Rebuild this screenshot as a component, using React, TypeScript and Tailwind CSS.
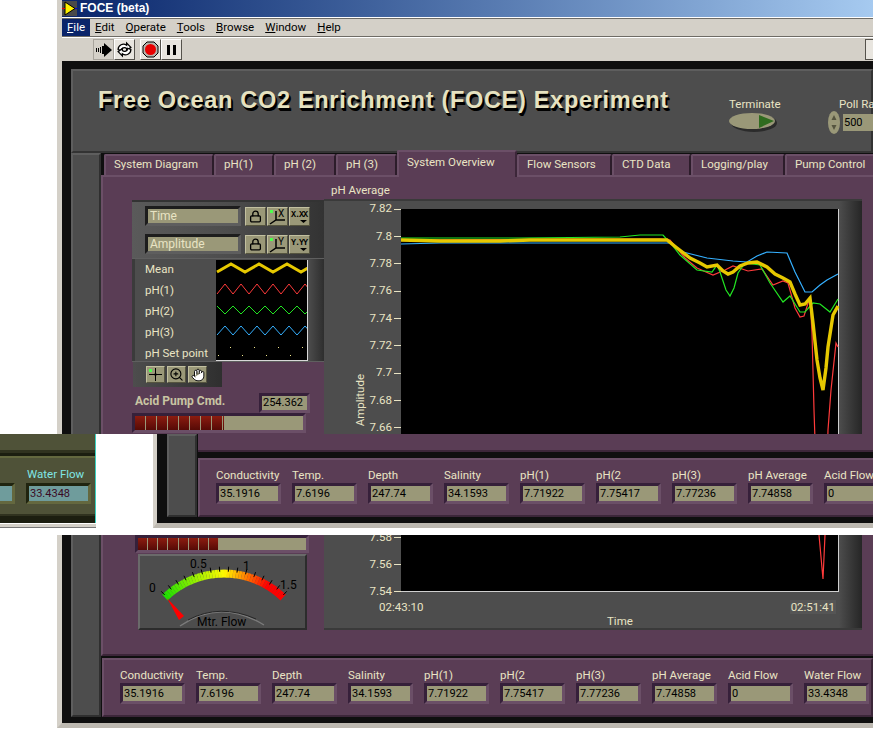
import { ReactNode } from 'react';
import { Hand, Lock, ZoomIn } from 'lucide-react';

const fields = [
  { label: 'Conductivity', value: '35.1916' },
  { label: 'Temp.', value: '7.6196' },
  { label: 'Depth', value: '247.74' },
  { label: 'Salinity', value: '34.1593' },
  { label: 'pH(1)', value: '7.71922' },
  { label: 'pH(2', value: '7.75417' },
  { label: 'pH(3)', value: '7.77236' },
  { label: 'pH Average', value: '7.74858' },
  { label: 'Acid Flow', value: '0' },
  { label: 'Water Flow', value: '33.4348' },
];

const tabs = [
  { label: 'System Diagram', width: 'w-[110px]' },
  { label: 'pH(1)', width: 'w-[60px]' },
  { label: 'pH (2)', width: 'w-[62px]' },
  { label: 'pH (3)', width: 'w-[61px]' },
  { label: 'System Overview', width: 'w-[120px]', active: true },
  { label: 'Flow Sensors', width: 'w-[95px]' },
  { label: 'CTD Data', width: 'w-[79px]' },
  { label: 'Logging/play', width: 'w-[94px]' },
  { label: 'Pump Control', width: 'w-[90px]' },
];

const menus = ['Edit', 'Operate', 'Tools', 'Browse', 'Window', 'Help'];

const yLabels = ['7.82', '7.8', '7.78', '7.76', '7.74', '7.72', '7.7', '7.68', '7.66', '7.64', '7.62', '7.6', '7.58', '7.56', '7.54'];

const meanLine = '401,240 440,241 445,241 500,241 530,240 620,240 667,240 677,248 690,258 700,263 707,267 717,265 723,271 728,274 733,272 740,266 748,263 757,262 767,267 775,274 783,278 790,282 795,294 800,305 805,304 810,298 813,323 817,360 820,378 823,390 826,368 828,347 833,315 838,306';
const blueLine = '401,244 440,243 520,243 620,243 670,243 683,252 695,255 707,258 733,261 747,262 757,256 767,252 787,253 795,272 805,292 812,292 820,285 827,280 838,274';
const greenLine = '401,238 520,238 620,237 640,235 663,235 672,245 680,255 697,270 712,272 717,265 720,272 726,290 730,296 734,288 738,273 745,263 760,265 770,283 783,302 790,296 800,312 805,312 813,303 820,304 830,312 838,299';
const redLine = '401,240 660,239 670,240 685,258 697,268 713,275 725,270 733,266 748,271 762,269 773,285 783,281 788,283 795,308 800,317 804,316 810,297 812,333 814,410 815,440 819,535 823,579 825,535 828,430 831,390 836,343 838,347';

// one zigzag per legend row
function zigzag(top: number, bottom: number, period: number, startLow: boolean) {
  const points: string[] = [];
  for (let i = 0; i * (period / 2) <= 100; i++) {
    const low = i % 2 === 0 ? startLow : !startLow;
    points.push(`${i * (period / 2) + 1},${low ? bottom : top}`);
  }
  return points.join(' ');
}

function ValueBox({ value, tone = 'olive' }: { value: string; tone?: 'olive' | 'teal' }) {
  const outer = tone === 'olive'
    ? 'border-t-[#36203a] border-l-[#36203a] border-r-[#6b4f67] border-b-[#6b4f67]'
    : 'border-t-[#20240f] border-l-[#20240f] border-r-[#64683f] border-b-[#64683f]';
  const inner = tone === 'olive' ? 'bg-[#9a9878] text-black' : 'bg-[#6f9c9c] text-[#3a0a24]';
  return (
    <div className={`w-[65px] h-[21px] border-[3px] ${outer}`}>
      <div className={`h-full px-[1px] text-[11px] leading-[15px] ${inner}`}>{value}</div>
    </div>
  );
}

function StatusPanel() {
  return (
    <div className="flex h-[59px] pl-[16px] pt-[8px] bg-[#5a3d55] border-2 border-t-[#6b4f67] border-l-[#6b4f67] border-b-[#3c2639] border-r-[#3c2639]">
      {fields.map((field) => (
        <div key={field.label} className="w-[76px] shrink-0">
          <div className="h-[15px] text-[11.5px] leading-[15px] text-[#e9e4c4] whitespace-nowrap">{field.label}</div>
          <ValueBox value={field.value} />
        </div>
      ))}
    </div>
  );
}

function OliveButton({ children, className = 'w-[21px] h-[19px]' }: { children: ReactNode; className?: string }) {
  return (
    <div className={`relative flex items-center justify-center bg-[#9a9878] border border-t-[#c2c0a0] border-l-[#c2c0a0] border-b-[#55543f] border-r-[#55543f] ${className}`}>
      {children}
    </div>
  );
}

function AxisField({ label, axis, format }: { label: string; axis: string; format: string }) {
  return (
    <div className="flex items-center gap-[4px]">
      <div className="w-[96px] h-[20px] border-[3px] border-t-[#1d1d1d] border-l-[#1d1d1d] border-b-[#5e5e5e] border-r-[#5e5e5e] bg-[#9a9878] text-[#e9e4c4] text-[12px] leading-[15px] pl-[2px]">
        {label}
      </div>
      <div className="flex gap-[1px]">
        <OliveButton>
          <Lock size={13} strokeWidth={2.4} className="text-black" />
        </OliveButton>
        <OliveButton>
          <span className="absolute left-[2px] top-[2px] w-[3px] h-[3px] bg-[#4dff4d]" />
          <svg width="19" height="17" viewBox="0 0 19 17" className="text-black">
            <path d="M8 3v9M2 16l6-4h9" fill="none" stroke="currentColor" strokeWidth="1.5" />
            <text x="10" y="9" fontSize="10" fill="currentColor">{axis}</text>
          </svg>
        </OliveButton>
        <OliveButton>
          <svg width="19" height="17" viewBox="0 0 19 17" className="text-black">
            <text x="1" y="9" fontSize="8.5" fontFamily="Liberation Mono, monospace" fontWeight="bold" textLength="17" fill="currentColor">{format}</text>
            <path d="M10 12h7l-3.5 3z" fill="currentColor" />
          </svg>
        </OliveButton>
      </div>
    </div>
  );
}

function Legend() {
  const dots = [0, 1, 2, 3, 4, 5, 6, 7];
  return (
    <div className="flex h-[104px] w-[192px] bg-[#4d4d4d] border-y border-[#5f5f5f]">
      <div className="w-[84px] pl-[10px] border-l-[3px] border-[#3b3b3b]">
        {['Mean', 'pH(1)', 'pH(2)', 'pH(3)', 'pH Set point'].map((name) => (
          <div key={name} className="h-[21px] text-[11.5px] leading-[21px] text-[#e9e4c4] whitespace-nowrap">{name}</div>
        ))}
      </div>
      <svg width="92" height="101" className="bg-black border-r border-b border-[#d8d8d8] mt-[1px]">
        <polyline points={zigzag(4, 12, 28, true)} fill="none" stroke="#e6c800" strokeWidth="3" />
        <polyline points={zigzag(24, 34, 16, true)} fill="none" stroke="#ff3b3b" />
        <polyline points={zigzag(46, 54, 16, false)} fill="none" stroke="#22e622" />
        <polyline points={zigzag(66, 75, 16, true)} fill="none" stroke="#35b0ff" />
        {dots.map((dot) => (
          <rect key={dot} x={dot * 12 + 2} y={dot % 2 === 0 ? 95 : 87} width="1" height="1" fill="#f0e68c" />
        ))}
      </svg>
      <div className="flex-1 bg-gradient-to-r from-[#4d4d4d] to-[#2e2e2e]" />
    </div>
  );
}

function PumpBar({ fill, heightClass }: { fill: string; heightClass: string }) {
  const segments = [0, 1, 2, 3, 4, 5, 6, 7];
  return (
    <div className="w-[174px] border-[3px] border-t-[#36203a] border-l-[#36203a] border-r-[#6b4f67] border-b-[#6b4f67]">
      <div className={`flex bg-[#9a9878] ${heightClass}`}>
        <div className={`flex h-full bg-gradient-to-b from-[#8c1c10] to-[#560a06] ${fill}`}>
          {segments.map((segment) => (
            <div key={segment} className="w-[11px] h-full border-r border-[#9a9878]" />
          ))}
        </div>
      </div>
    </div>
  );
}

function Gauge() {
  const steps = Array.from({ length: 44 }, (_, i) => i);
  const colorAt = (t: number) => {
    if (t < 0.5) return `rgb(${Math.round(30 + 450 * t)},${Math.round(225 + 50 * t)},0)`;
    if (t < 0.85) return `rgb(255,${Math.round(250 - (t - 0.5) * 714)},0)`;
    return 'rgb(255,0,0)';
  };
  const polar = (deg: number, r: number) => {
    const a = (deg * Math.PI) / 180;
    return [86 + r * Math.sin(a), 104.6 - r * Math.cos(a)];
  };
  const ticks = Array.from({ length: 16 }, (_, i) => -43 + (i * 86) / 15);
  return (
    <div className="w-[169px] h-[76px] ml-[6px] mt-[1px] bg-[#4d4d4d] border-2 border-t-[#6a6a6a] border-l-[#6a6a6a] border-b-[#2c2c2c] border-r-[#2c2c2c]">
      <svg width="165" height="72" viewBox="2 2 165 72">
        {steps.map((i) => {
          const t = i / 43;
          const [x1, y1] = polar(-43 + 86 * t, 81);
          const [x2, y2] = polar(-43 + 86 * t, 89);
          return <line key={i} x1={x1} y1={y1} x2={x2} y2={y2} stroke={colorAt(t)} strokeWidth="3" />;
        })}
        {ticks.map((deg) => {
          const [x1, y1] = polar(deg, 87);
          const [x2, y2] = polar(deg, 92);
          return <line key={deg} x1={x1} y1={y1} x2={x2} y2={y2} stroke="#000" />;
        })}
        <polygon points="29,44 41,66 46,62" fill="#ff0000" />
        <path d="M42 72Q82 44 126 71" fill="none" stroke="#7b7b7b" strokeWidth="1.4" />
        <path d="M50 66Q82 49 118 65" fill="none" stroke="#262626" />
        <text x="11" y="38" fontSize="12" fill="#000">0</text>
        <text x="52" y="14" fontSize="12" fill="#000">0.5</text>
        <text x="105" y="16" fontSize="12" fill="#000">1</text>
        <text x="142" y="35" fontSize="12" fill="#000">1.5</text>
        <text x="59" y="72" fontSize="12" fill="#000">Mtr. Flow</text>
      </svg>
    </div>
  );
}

function LeftControls() {
  return (
    <div className="w-[192px] ml-[29px] pt-[23px] shrink-0">
      <div className="w-[192px] h-[58px] pl-[13px] pt-[4px] flex flex-col gap-[8px] bg-gradient-to-r from-[#5a5a5a] via-[#4d4d4d] to-[#333333] border-t-2 border-[#333333]">
        <AxisField label="Time" axis="X" format="X.XX" />
        <AxisField label="Amplitude" axis="Y" format="Y.YY" />
      </div>
      <Legend />
      <div className="w-[89px] h-[25px] ml-[1px] flex items-center gap-[2px] pl-[13px] bg-gradient-to-r from-[#4d4d4d] to-[#2f2f2f]">
        <OliveButton className="w-[19px] h-[17px]">
          <span className="absolute left-[2px] top-[2px] w-[3px] h-[3px] bg-[#4dff4d]" />
          <svg width="15" height="15" viewBox="0 0 15 15">
            <path d="M7.5 1v13M1 7.5h13" stroke="#000" strokeWidth="1" />
            <circle cx="7.5" cy="7.5" r="1.2" fill="#000" />
          </svg>
        </OliveButton>
        <OliveButton className="w-[19px] h-[17px]">
          <ZoomIn size={15} strokeWidth={1.8} className="text-black" />
        </OliveButton>
        <OliveButton className="w-[19px] h-[17px]">
          <Hand size={14} strokeWidth={1.6} className="text-black fill-white" />
        </OliveButton>
      </div>
      <div className="flex items-center justify-between w-[175px] h-[21px] mt-[5px] ml-[3px]">
        <div className="-mt-[3px] text-[12px] font-bold text-[#c9c5a3] whitespace-nowrap">Acid Pump Cmd.</div>
        <div className="w-[51px] h-[20px] border-[3px] border-t-[#36203a] border-l-[#36203a] border-r-[#6b4f67] border-b-[#6b4f67] bg-[#9a9878] text-[11px] leading-[14px] text-black pl-[1px]">254.362</div>
      </div>
      <PumpBar fill="w-[89px]" heightClass="h-[14px]" />
      <div className="h-[102px]" />
      <div className="ml-[3px]">
        <PumpBar fill="w-[81px]" heightClass="h-[12px]" />
      </div>
      <Gauge />
    </div>
  );
}

function Chart() {
  return (
    <div className="relative w-[438px] h-[383px] bg-black border-r border-b border-[#cfcfcf]">
      <svg width="438" height="383" viewBox="401 209 438 383">
        <polyline points={redLine} fill="none" stroke="#ff3b3b" strokeWidth="1.2" />
        <polyline points={greenLine} fill="none" stroke="#22e622" strokeWidth="1.2" />
        <polyline points={blueLine} fill="none" stroke="#35b0ff" strokeWidth="1.2" />
        <polyline points={meanLine} fill="none" stroke="#e6c800" strokeWidth="3.4" />
      </svg>
    </div>
  );
}

function GraphPanel() {
  return (
    <div className="pt-[5px] shrink-0">
      <div className="h-[17px] pl-[7px] text-[11.5px] leading-[16px] text-[#e9e4c4]">pH Average</div>
      <div className="flex w-[538px] h-[431px] bg-[#4d4d4d] border-t-2 border-b-2 border-[#3a3a3a]">
        <div className="flex flex-col flex-1 pt-[8px]">
          <div className="flex">
            <div className="w-[43px] flex items-center justify-end h-[383px]">
              <span className="[writing-mode:vertical-rl] rotate-180 text-[11.5px] leading-[14px] text-[#e9e4c4]">Amplitude</span>
            </div>
            <div className="w-[34px] h-[383px] flex flex-col justify-between items-end">
              {yLabels.map((label) => (
                <div key={label} className="flex items-center h-0 gap-[2px] text-[11.5px] text-[#e9e4c4]">
                  {label}
                  <span className="w-[7px] h-[1px] bg-[#e9e4c4]" />
                </div>
              ))}
            </div>
            <Chart />
          </div>
          <div className="flex justify-between pl-[55px] pr-[3px] pt-[8px] text-[11.5px] leading-[14px] text-[#e9e4c4]">
            <span>02:43:10</span>
            <span className="bg-[#555555] px-[1px]">02:51:41</span>
          </div>
          <div className="pl-[283px] text-[11.5px] leading-[14px] text-[#e9e4c4]">Time</div>
        </div>
        <div className="w-[23px] bg-gradient-to-r from-[#4d4d4d] to-[#262626]" />
      </div>
    </div>
  );
}

function TitleSection() {
  return (
    <div className="flex items-center h-[84px] pl-[25px] bg-[#4d4d4d] border-2 border-t-[#5e5e5e] border-l-[#5e5e5e] border-b-[#333333] border-r-[#333333]">
      <div className="w-[631px] shrink-0 pb-[20px] text-[23.5px] font-bold whitespace-nowrap text-[#e6e2c0] [text-shadow:1px_2px_0_#000,2px_3px_0_#000] font-['Liberation_Sans',sans-serif] tracking-[0.7px]">
        Free Ocean CO2 Enrichment (FOCE) Experiment
      </div>
      <div className="w-[99px] shrink-0 pt-[8px]">
        <div className="text-[11.5px] leading-[14px] text-[#e9e4c4]">Terminate</div>
        <svg width="50" height="22" className="mt-[1px]">
          <ellipse cx="25" cy="11" rx="23" ry="9" fill="#2b2b2b" />
          <ellipse cx="23" cy="9" rx="23" ry="8" fill="#9a9878" />
          <polygon points="30,3 45,9 30,16" fill="#2f6b1f" />
        </svg>
      </div>
      <div className="shrink-0 pt-[8px]">
        <div className="pl-[11px] text-[11.5px] leading-[14px] text-[#e9e4c4] whitespace-nowrap">Poll Rate</div>
        <div className="flex items-center gap-[3px]">
          <svg width="12" height="23" viewBox="0 0 12 23">
            <ellipse cx="6" cy="11.5" rx="6" ry="11.5" fill="#9a9878" />
            <path d="M6 4l2.5 5h-5zM6 19l-2.5-5h5z" fill="#55543f" />
          </svg>
          <div className="w-[30px] h-[17px] bg-[#9a9878] text-[11px] leading-[17px] text-black pl-[1px]">500</div>
        </div>
      </div>
    </div>
  );
}

function Tabs() {
  return (
    <div className="flex items-end h-[22px] pl-[2px]">
      {tabs.map((tab) => (
        <div
          key={tab.label}
          className={`shrink-0 pl-[8px] text-[11.5px] whitespace-nowrap text-[#e9e4c4] bg-[#5a3d55] border-t-2 border-l-2 border-[#6b4f67] rounded-t-[2px] ${tab.width} ${tab.active ? 'h-[27px] leading-[20px] -mb-[2px] relative z-10 border-r-2 border-r-[#3c2639]' : 'h-[21px] leading-[17px] border-r-2 border-r-[#2c1c2a]'}`}
        >
          {tab.label}
        </div>
      ))}
    </div>
  );
}

function Toolbar() {
  return (
    <div className="flex items-center h-[24px] pl-[31px] gap-[5px] bg-[#d4d0c8] border-t border-white">
      <div className="flex">
        <div className="flex items-center justify-center w-[21px] h-[21px] border border-[#a8a49c]">
          <svg width="16" height="14" viewBox="0 0 16 14">
            <path d="M0 5h1v4H0zM2 5h1v4H2zM4 4h1v6H4zM6 3h2V0l8 7-8 7v-3H6z" fill="#000" />
          </svg>
        </div>
        <div className="flex items-center justify-center w-[21px] h-[21px] bg-[#e8e5df] border border-t-white border-l-white border-b-[#55524c] border-r-[#55524c]">
          <svg width="17" height="17" viewBox="0 0 16 16" fill="#fff" stroke="#000" strokeWidth="1.2">
            <path d="M2 8a5 5 0 0 1 8-4V2l4 4-4 3V7a3 3 0 0 0-5 2z" />
            <path d="M14 8a5 5 0 0 1-8 4v2l-4-4 4-3v2a3 3 0 0 0 5-2z" />
          </svg>
        </div>
      </div>
      <div className="flex">
        <div className="flex items-center justify-center w-[21px] h-[21px] bg-[#e8e5df] border border-t-white border-l-white border-b-[#55524c] border-r-[#55524c]">
          <svg width="17" height="17" viewBox="0 0 17 17">
            <polygon points="5,1 12,1 16,5 16,12 12,16 5,16 1,12 1,5" fill="#b8b4ac" stroke="#000" />
            <circle cx="8.5" cy="8.5" r="5.5" fill="#e80000" />
          </svg>
        </div>
        <div className="flex items-center justify-center gap-[3px] w-[21px] h-[21px] bg-[#e8e5df] border border-t-white border-l-white border-b-[#55524c] border-r-[#55524c]">
          <span className="w-[3px] h-[10px] bg-black" />
          <span className="w-[3px] h-[10px] bg-black" />
        </div>
      </div>
      <div className="ml-auto mr-[-2px] w-[10px] h-[21px] bg-[#e8e5df] border border-[#55524c]" />
    </div>
  );
}

function AppIcon() {
  return (
    <svg width="15" height="15" viewBox="0 0 15 15" className="shrink-0">
      <rect width="15" height="15" fill="#4a4a4a" />
      <polygon points="3,1 13,7.5 3,14" fill="#fff200" stroke="#000" />
      <path d="M0 7.5h3" stroke="#e00000" />
      <path d="M13 7.5h2" stroke="#0000e0" />
    </svg>
  );
}

export default function App() {
  return (
    <div className="relative w-[873px] h-[735px] overflow-hidden bg-white font-['Roboto','Liberation_Sans',sans-serif]">
      <div className="ml-[57px] w-[816px] h-[728px] border-l-[5px] border-b-[5px] border-l-[#d4d0c8] border-b-[#bdb9b1] flex flex-col">
        <div className="flex items-center gap-[3px] h-[17px] bg-gradient-to-r from-[#0a246a] to-[#a6caf0] text-white font-bold text-[12px] pb-[1px] font-['Liberation_Sans',sans-serif]">
          <AppIcon />
          FOCE (beta)
        </div>
        <div className="flex items-center h-[19px] mt-[1px] bg-[#d4d0c8] text-[11.5px] text-black border-t border-b border-[#6e6b65]">
          <div className="h-full px-[5px] mr-[5px] bg-[#0a246a] text-white leading-[17px]"><u>F</u>ile</div>
          <div className="flex gap-[11px]">
            {menus.map((menu) => (
              <div key={menu}><u>{menu[0]}</u>{menu.slice(1)}</div>
            ))}
          </div>
        </div>
        <Toolbar />
        <div className="flex-1 min-h-0 pl-[9px] pt-[8px] bg-[#0f0f0f]">
          <TitleSection />
          <div className="flex">
            <div className="w-[30px] h-[564px] mr-[1px] shrink-0 bg-[#4d4d4d] border-2 border-t-[#5e5e5e] border-l-[#5e5e5e] border-b-[#2f2f2f] border-r-[#2f2f2f]" />
            <div className="flex-1 min-w-0">
              <Tabs />
              <div className="flex h-[481px] bg-[#5a3d55] border-t-2 border-l-2 border-b-2 border-t-[#6b4f67] border-l-[#6b4f67] border-b-[#3c2639] -ml-[1px]">
                <LeftControls />
                <GraphPanel />
              </div>
              <div className="h-[2px]" />
              <StatusPanel />
            </div>
          </div>
        </div>
      </div>

      {/* window dragged over the main one, only its lower edge shows */}
      <div className="absolute left-0 top-[434px] w-[873px] h-[101px] bg-white overflow-hidden">
        <div className="absolute left-0 top-0 w-[96px] h-[94px] overflow-hidden bg-[#1c1e10] border-r border-[#39d0c0]">
          <div className="h-[19px] bg-[#4f5238] border-b-[3px] border-[#30321f]" />
          <div className="relative h-[60px] mt-[3px] bg-[#4f5238] border-t-2 border-[#64683f] border-b-2 border-b-[#30321f]">
            <div className="absolute left-[27px] top-[9px] text-[11.5px] leading-[14px] text-[#7fe6e6] whitespace-nowrap">Water Flow</div>
            <div className="absolute left-[26px] top-[25px]">
              <ValueBox value="33.4348" tone="teal" />
            </div>
            <div className="absolute left-[-50px] top-[25px]">
              <ValueBox value="" tone="teal" />
            </div>
          </div>
        </div>
        <div className="absolute left-0 top-[89px] w-[96px] h-[5px] bg-[#d4d0c8] border-t border-white border-b border-b-[#777777]" />
        <div className="absolute left-[153px] top-0 w-[720px] h-[94px] flex flex-col border-l-[4px] border-b-[5px] border-l-[#d4d0c8] border-b-[#bdb9b1] bg-[#0f0f0f]">
          <div className="flex h-[83px] pl-[10px]">
            <div className="w-[30px] shrink-0 bg-[#4d4d4d] border-2 border-t-[#5e5e5e] border-l-[#5e5e5e] border-b-[#2f2f2f] border-r-[#2f2f2f]" />
            <div className="flex-1 ml-[1px] min-w-0">
              <div className="h-[18px] bg-[#5a3d55] border-b-2 border-[#3c2639]" />
              <div className="h-[6px]" />
              <div className="w-[771px]">
                <StatusPanel />
              </div>
            </div>
          </div>
        </div>
      </div>
    </div>
  );
}
